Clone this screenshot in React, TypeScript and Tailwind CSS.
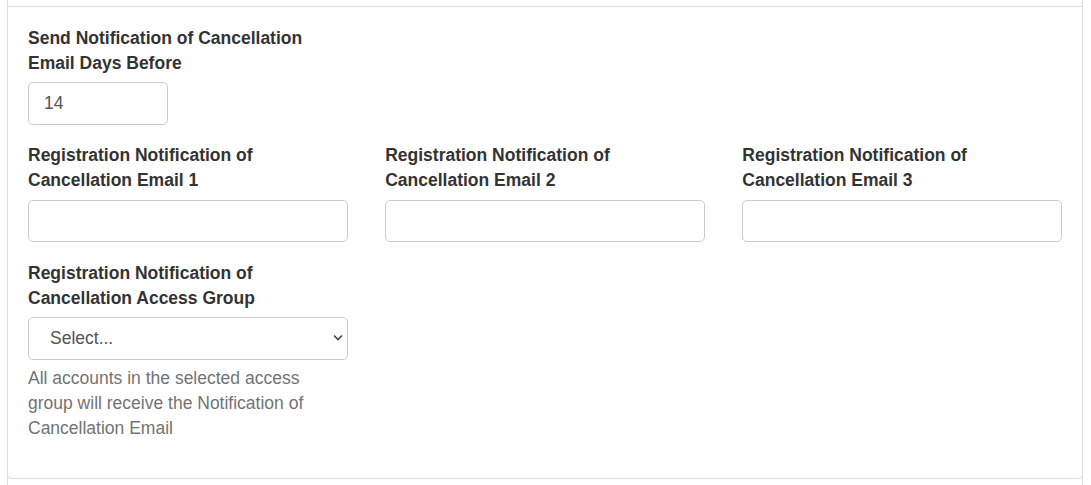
import React from "react";

const font = { fontFamily: '"Liberation Sans", Arial, Helvetica, sans-serif' };

function Label({ children }: { children: React.ReactNode }) {
  return (
    <label className="block mb-[6.25px] text-[17.5px] leading-[25px] font-bold text-[#333]">
      {children}
    </label>
  );
}

function TextInput({ value = "", className = "" }: { value?: string; className?: string }) {
  return (
    <input
      type="text"
      defaultValue={value}
      className={`block h-[42.5px] px-[15px] text-[17.5px] text-[#555] bg-white border border-[#ccc] rounded-[5px] outline-none ${className}`}
      style={font}
    />
  );
}

export default function App() {
  const emails = [1, 2, 3];

  return (
    <div className="w-[1091px] h-[485px] bg-white overflow-hidden" style={font}>
      <div className="ml-[7px] w-[1076px] h-full border-x border-[#ddd] pt-[6px]">
        <div className="-mx-px border border-[#ddd] rounded-b-[4px] pt-[18.75px] pb-[37px] px-[20px]">
          {/* days before */}
          <div className="grid grid-cols-3 gap-x-[37.5px]">
            <div className="mb-[18.75px]">
              <Label>Send Notification of Cancellation Email Days Before</Label>
              <TextInput value="14" className="w-[140px]" />
            </div>
          </div>

          {/* email fields */}
          <div className="grid grid-cols-3 gap-x-[37.5px]">
            {emails.map((n) => (
              <div key={n} className="mb-[18.75px]">
                <Label>Registration Notification of Cancellation Email {n}</Label>
                <TextInput className="w-full" />
              </div>
            ))}
          </div>

          {/* access group */}
          <div className="grid grid-cols-3 gap-x-[37.5px]">
            <div>
              <Label>Registration Notification of Cancellation Access Group</Label>
              <div className="relative">
                <select
                  className="block w-full h-[42.5px] pl-[21px] pr-[30px] text-[17.5px] text-[#555] bg-white border border-[#ccc] rounded-[5px] appearance-none outline-none"
                  style={font}
                  defaultValue=""
                >
                  <option value="">Select...</option>
                </select>
                <svg
                  className="absolute right-[5px] top-[17px] pointer-events-none"
                  width="10"
                  height="7"
                  viewBox="0 0 10 7"
                  fill="none"
                >
                  <path d="M1 1.5 L5 5.5 L9 1.5" stroke="#444" strokeWidth="1.6" />
                </svg>
              </div>
              <p className="mt-[6.25px] text-[17.5px] leading-[25px] text-[#737373]">
                All accounts in the selected access group will receive the Notification of
                Cancellation Email
              </p>
            </div>
          </div>
        </div>
      </div>
    </div>
  );
}
